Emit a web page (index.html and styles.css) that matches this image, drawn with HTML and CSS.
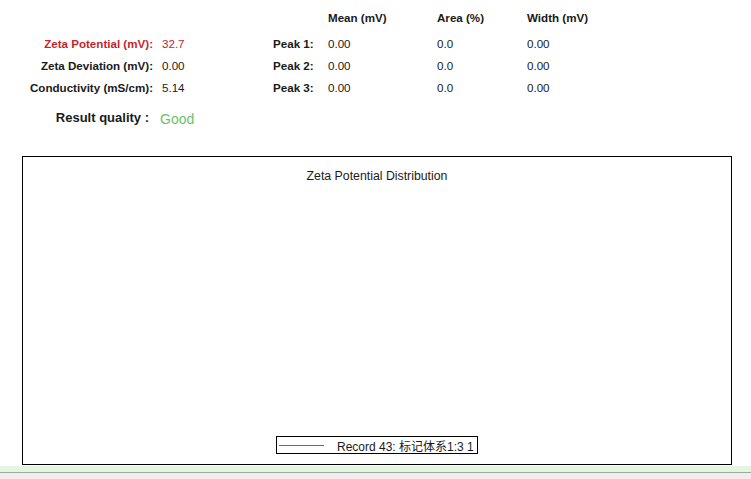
FILE: index.html
```html
<!DOCTYPE html>
<html lang="en">
<head>
  <meta charset="UTF-8" />
  <title>Zeta Potential Result</title>
  <link rel="stylesheet" href="styles.css">
</head>
<body>
  <div class="summary">
    <span></span><span></span><span></span>
    <span class="head">Mean (mV)</span>
    <span class="head">Area (%)</span>
    <span class="head">Width (mV)</span>

    <span class="label red">Zeta Potential (mV):</span>
    <span class="value red">32.7</span>
    <span class="peak">Peak 1:</span>
    <span>0.00</span><span>0.0</span><span>0.00</span>

    <span class="label">Zeta Deviation (mV):</span>
    <span class="value">0.00</span>
    <span class="peak">Peak 2:</span>
    <span>0.00</span><span>0.0</span><span>0.00</span>

    <span class="label">Conductivity (mS/cm):</span>
    <span class="value">5.14</span>
    <span class="peak">Peak 3:</span>
    <span>0.00</span><span>0.0</span><span>0.00</span>
  </div>

  <div class="quality">
    <span class="quality-label">Result quality :</span>
    <span class="quality-value">Good</span>
  </div>

  <div class="chart">
    <div class="chart-title">Zeta Potential Distribution</div>
    <div class="plot"></div>
    <div class="legend">
      <span class="legend-line"></span>
      <span>Record 43: 标记体系1:3 1</span>
    </div>
  </div>

  <div class="statusbar"></div>
  <div class="taskbar"></div>
</body>
</html>
```

FILE: styles.css
```css
body {
  margin: 0;
  background: #fff;
  color: #1a1a1a;
  font-family: "Liberation Sans", Arial, "Noto Sans CJK SC", sans-serif;
  font-size: 11.6px;
}
.summary {
  display: grid;
  grid-template-columns: 162px 111px 55px 109px 90px auto;
  grid-template-rows: 22px 4px 22px 22px 22px;
  padding-top: 7px;
  line-height: 22px;
}
.summary > span:nth-child(-n+6) {
  grid-row: 1;
}
.head,
.label,
.peak {
  font-weight: bold;
}
.label {
  text-align: right;
  padding-right: 9px;
}
.summary > span:nth-child(n+7):nth-child(-n+12) {
  grid-row: 3;
}
.summary > span:nth-child(n+13):nth-child(-n+18) {
  grid-row: 4;
}
.summary > span:nth-child(n+19) {
  grid-row: 5;
}
.red {
  color: #c3262d;
}
.quality {
  display: flex;
  align-items: baseline;
  margin-top: 8px;
  line-height: 20px;
}
.quality-label {
  width: 149px;
  text-align: right;
  padding-right: 11px;
  font-size: 13px;
  font-weight: bold;
}
.quality-value {
  color: #6cbf6a;
  font-size: 14px;
  position: relative;
  top: 2px;
}
.chart {
  display: flex;
  flex-direction: column;
  align-items: center;
  box-sizing: border-box;
  width: 710px;
  height: 309px;
  margin: 28px 0 0 22px;
  border: 1.5px solid #000;
}
.chart-title {
  margin-top: 12px;
  font-size: 12.3px;
}
.plot {
  flex: 1;
}
.legend {
  display: flex;
  align-items: center;
  box-sizing: border-box;
  width: 202px;
  height: 18px;
  margin-bottom: 10px;
  border: 1px solid #000;
  font-size: 12px;
}
.legend-line {
  width: 45px;
  border-top: 1px solid #d0404c;
  margin: 0 13px 0 2px;
}
.statusbar {
  height: 6px;
  margin-top: 1px;
  background: #e4f5e2;
  border-bottom: 1px solid #a4a6a4;
}
.taskbar {
  height: 8px;
  background: #efeded;
}
```
